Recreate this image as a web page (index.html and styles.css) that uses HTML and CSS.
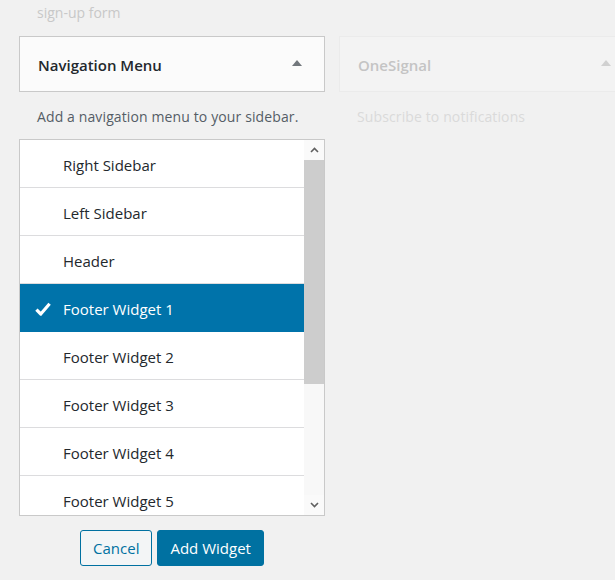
FILE: index.html
```html
<!DOCTYPE html>
<html lang="en">
<head>
<meta charset="UTF-8" />
<meta name="viewport" content="width=device-width, initial-scale=1" />
<title>Widgets – Add to sidebar</title>
<link rel="stylesheet" href="styles.css">
</head>
<body>

<div class="widgets">
  <!-- lewa kolumna: aktywny widget -->
  <div class="widget-col">
    <p class="prev-desc">sign-up form</p>
    <div class="widget-top open">
      <h3>Navigation Menu</h3>
      <span class="toggle"></span>
    </div>
    <p class="widget-desc">Add a navigation menu to your sidebar.</p>

    <div class="chooser">
      <ul class="sidebar-list">
        <li>Right Sidebar</li>
        <li>Left Sidebar</li>
        <li>Header</li>
        <li class="selected">
          <svg class="check" width="16" height="14" viewBox="0 0 16 14"><path d="M1.4 7.6 L5.8 12 L14.6 1.8" fill="none" stroke="#fff" stroke-width="3.2" stroke-linejoin="round"/></svg>
          Footer Widget 1
        </li>
        <li>Footer Widget 2</li>
        <li>Footer Widget 3</li>
        <li>Footer Widget 4</li>
        <li>Footer Widget 5</li>
      </ul>
      <div class="scrollbar">
        <span class="sb-btn"><svg width="9" height="6" viewBox="0 0 9 6"><path d="M1 5 L4.5 1.5 L8 5" fill="none" stroke="#606060" stroke-width="1.6"/></svg></span>
        <div class="sb-track"><div class="sb-thumb"></div></div>
        <span class="sb-btn"><svg width="9" height="6" viewBox="0 0 9 6"><path d="M1 1 L4.5 4.5 L8 1" fill="none" stroke="#606060" stroke-width="1.6"/></svg></span>
      </div>
    </div>

    <div class="chooser-actions">
      <button class="btn btn-secondary">Cancel</button>
      <button class="btn btn-primary">Add Widget</button>
    </div>
  </div>

  <!-- prawa kolumna: wyszarzony widget -->
  <div class="widget-col faded">
    <p class="prev-desc"></p>
    <div class="widget-top">
      <h3>OneSignal</h3>
      <span class="toggle"></span>
    </div>
    <p class="widget-desc">Subscribe to notifications</p>
  </div>
</div>

</body>
</html>
```

FILE: styles.css
```css
body {
  margin: 0; background: #f1f1f1; color: #23282d;
  font-family: 'Open Sans', 'Noto Sans', sans-serif;
  overflow: hidden;
}
.widgets {
  display: grid;
  grid-template-columns: 306px 1fr;
  column-gap: 14px;
  padding-left: 19px;
}
.widget-col {
  min-width: 0;
}
.prev-desc {
  margin: 0; height: 36px;
  line-height: 26px; padding-left: 18px;
  font-size: 14px; color: #c8c8c8;
}
.widget-top {
  height: 52px;
  border: 1px solid #c9c9c9;
  background: #fbfbfb;
  display: flex; align-items: center; justify-content: space-between;
  padding: 2px 22px 0 18px;
}
.widget-top h3 {
  margin: 0; font-size: 15px; font-weight: 600;
  color: #23282d;
}
.toggle {
  width: 0; height: 0;
  border-left: 5px solid transparent;
  border-right: 5px solid transparent;
  border-bottom: 6px solid #72777c;
  margin-top: -4px;
}
.widget-desc {
  margin: 0; padding: 15px 0 12px 18px;
  line-height: 20px; font-size: 14px;
  letter-spacing: 0.12px;
  color: #555d66;
}
.chooser {
  display: flex;
  height: 375px;
  border: 1px solid #c9c9c9;
  background: #fff;
  overflow: hidden;
}
.sidebar-list {
  flex: 1;
  list-style: none; margin: 0; padding: 0;
}
.sidebar-list li {
  height: 47px; line-height: 50px;
  border-bottom: 1px solid #dcdcde;
  padding-left: 43px;
  font-size: 15px; color: #23282d;
  position: relative;
}
.sidebar-list li.selected {
  background: #0073aa; color: #fff;
  border-bottom-color: #0073aa;
}
.check {
  position: absolute; left: 15px; top: 18px;
}
.scrollbar {
  width: 20px;
  display: flex; flex-direction: column;
  background: #f8f8f8;
}
.sb-btn {
  height: 20px;
  display: flex; align-items: center; justify-content: center;
  background: #fafafa;
}
.sb-track {
  flex: 1;
}
.sb-thumb {
  height: 224px;
  background: #cdcdcd;
}
.chooser-actions {
  display: flex; justify-content: center; gap: 5px;
  margin-top: 14px;
}
.btn {
  height: 36px; padding: 0 12px;
  font-family: inherit; font-size: 15px;
  border-radius: 3px; cursor: pointer;
}
.btn-secondary {
  background: #f3f5f6; color: #0071a1;
  border: 1px solid #0071a1;
}
.btn-primary {
  background: #0071a1; color: #fff;
  border: 1px solid #0071a1;
}
.faded .widget-top {
  background: #f3f3f3; border-color: #ebebeb;
  margin-right: -10px; padding-right: 13px;
}
.faded .widget-top h3 { color: #c4c4c4; }
.faded .toggle { border-bottom-color: #d0d0d0; }
.faded .widget-desc { color: #dadada; }
```
